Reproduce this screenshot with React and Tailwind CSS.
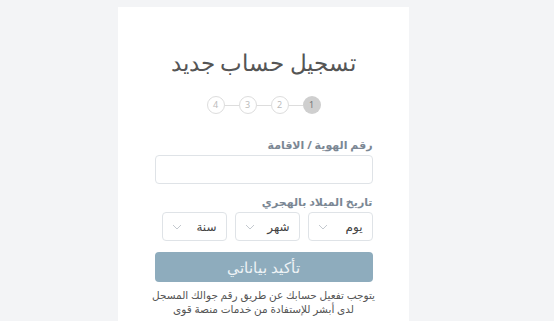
import React from 'react';

const Chevron = () => (
  <svg width="10" height="6" viewBox="0 0 10 6" fill="none" className="shrink-0">
    <path d="M1 1l4 4 4-4" stroke="#c4c9cf" strokeWidth="1" />
  </svg>
);

const Select = ({ label }) => (
  <div className="flex h-[29px] w-[65px] items-center justify-between rounded-[4px] border border-[#dfe3e7] bg-white px-[9px]">
    <span className="text-[12px] text-[#444]">{label}</span>
    <Chevron />
  </div>
);

const App = () => {
  const steps = [1, 2, 3, 4];

  return (
    <div
      dir="rtl"
      className="flex h-[321px] justify-center overflow-hidden bg-[#f3f4f6] pt-[7px]"
      style={{ fontFamily: '"Noto Sans", "DejaVu Sans", sans-serif' }}
    >
      <div className="mr-[27px] w-[291px] bg-white">
        <h1 className="mt-[39px] text-center text-[23px] font-light leading-[32px] text-[#555]">
          تسجيل حساب جديد
        </h1>

        <div className="mt-[18px] flex items-center justify-center">
          {steps.map((s, i) => (
            <React.Fragment key={s}>
              {i > 0 && <div className="h-px w-[14px] bg-[#ddd]" />}
              <div
                className={`flex h-[18px] w-[18px] items-center justify-center rounded-full text-[9px] ${
                  s === 1 ? 'bg-[#cfcfcf] text-[#777]' : 'border border-[#ddd] text-[#bbb]'
                }`}
              >
                {s}
              </div>
            </React.Fragment>
          ))}
        </div>

        <div className="mx-auto mt-[22px] w-[218px]">
          <label className="block text-[11px] font-bold leading-[18px] text-[#7b8794]">
            رقم الهوية / الاقامة
          </label>
          <div className="mt-[1px] h-[29px] rounded-[4px] border border-[#dfe3e7]" />

          <label className="mt-[9px] block text-[11px] font-bold leading-[18px] text-[#7b8794]">
            تاريخ الميلاد بالهجري
          </label>
          <div className="mt-[1px] flex gap-[8px] pl-[7px]">
            <Select label="يوم" />
            <Select label="شهر" />
            <Select label="سنة" />
          </div>

          <button className="mt-[11px] h-[30px] w-full rounded-[4px] bg-[#8eacbd] text-[15px] font-light text-[#eef3f6]">
            تأكيد بياناتي
          </button>

          <p className="-mx-[20px] mt-[6px] whitespace-nowrap text-center text-[10.5px] leading-[14px] text-[#555]">
            يتوجب تفعيل حسابك عن طريق رقم جوالك المسجل
            <br />
            لدى أبشر للإستفادة من خدمات منصة قوى
          </p>
        </div>
      </div>
    </div>
  );
};

export default App;
